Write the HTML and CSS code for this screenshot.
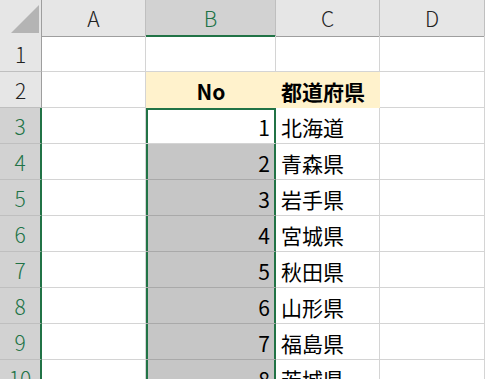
FILE: index.html
```html
<!DOCTYPE html>
<html lang="ja">
  <head>
    <meta charset="utf-8" />
    <meta name="viewport" content="width=device-width,initial-scale=1" />
    <title>Sheet1</title>
    <link rel="stylesheet" href="styles.css">
  </head>
  <body>
    <div class="sheet">
      <div class="row">
        <div class="corner">
          <svg width="42" height="36" viewBox="0 0 42 36"><polygon points="39,5 39,33 11,33" fill="#b4b4b4" /></svg>
        </div>
        <div class="col-head">A</div>
        <div class="col-head active">B</div>
        <div class="col-head">C</div>
        <div class="col-head">D</div>
      </div>

      <div class="row">
        <div class="row-head">1</div>
        <div class="cell"></div>
        <div class="cell"></div>
        <div class="cell"></div>
        <div class="cell"></div>
      </div>

      <div class="row">
        <div class="row-head">2</div>
        <div class="cell"></div>
        <div class="cell title center">No</div>
        <div class="cell title">都道府県</div>
        <div class="cell"></div>
      </div>

      <div class="row">
        <div class="row-head active">3</div>
        <div class="cell"></div>
        <div class="cell num sel first">1</div>
        <div class="cell">北海道</div>
        <div class="cell"></div>
      </div>

      <div class="row">
        <div class="row-head active">4</div>
        <div class="cell"></div>
        <div class="cell num sel picked">2</div>
        <div class="cell">青森県</div>
        <div class="cell"></div>
      </div>

      <div class="row">
        <div class="row-head active">5</div>
        <div class="cell"></div>
        <div class="cell num sel picked">3</div>
        <div class="cell">岩手県</div>
        <div class="cell"></div>
      </div>

      <div class="row">
        <div class="row-head active">6</div>
        <div class="cell"></div>
        <div class="cell num sel picked">4</div>
        <div class="cell">宮城県</div>
        <div class="cell"></div>
      </div>

      <div class="row">
        <div class="row-head active">7</div>
        <div class="cell"></div>
        <div class="cell num sel picked">5</div>
        <div class="cell">秋田県</div>
        <div class="cell"></div>
      </div>

      <div class="row">
        <div class="row-head active">8</div>
        <div class="cell"></div>
        <div class="cell num sel picked">6</div>
        <div class="cell">山形県</div>
        <div class="cell"></div>
      </div>

      <div class="row">
        <div class="row-head active">9</div>
        <div class="cell"></div>
        <div class="cell num sel picked">7</div>
        <div class="cell">福島県</div>
        <div class="cell"></div>
      </div>

      <div class="row">
        <div class="row-head active">10</div>
        <div class="cell"></div>
        <div class="cell num sel picked">8</div>
        <div class="cell">茨城県</div>
        <div class="cell"></div>
      </div>
    </div>
  </body>
</html>
```

FILE: styles.css
```css
html,
body {
  margin: 0;
  height: 100%;
  overflow: hidden;
  background-color: #fff;
}

*,
:after,
:before {
  box-sizing: border-box;
}

.sheet {
  font-family: "Noto Sans CJK JP", "Noto Sans", sans-serif;
  font-size: 21px;
  color: #000;
}

.row {
  display: grid;
  grid-template-columns: 42px 104px 130px 104px 105px;
  height: 36px;
}

.corner {
  background-color: #e6e6e6;
  border-right: 1px solid #9e9e9e;
  border-bottom: 1px solid #9e9e9e;
}

.corner svg {
  display: block;
}

.col-head {
  display: flex;
  align-items: center;
  justify-content: center;
  background-color: #e6e6e6;
  border-right: 1px solid #bfbfbf;
  border-bottom: 1px solid #9e9e9e;
  color: #222;
  font-weight: 300;
}

.col-head.active {
  background-color: #d2d2d2;
  border-bottom: 2px solid #217346;
  color: #217346;
}

.row-head {
  display: flex;
  align-items: center;
  justify-content: center;
  background-color: #e6e6e6;
  border-right: 1px solid #9e9e9e;
  border-bottom: 1px solid #bfbfbf;
  color: #222;
  font-weight: 300;
}

.row-head.active {
  background-color: #d2d2d2;
  border-right: 2px solid #217346;
  color: #217346;
}

.cell {
  display: flex;
  align-items: flex-end;
  padding: 0 4px 2px 5px;
  border-right: 1px solid #d4d4d4;
  border-bottom: 1px solid #d4d4d4;
  white-space: nowrap;
  line-height: 1.3;
}

.cell.title {
  background-color: #fff2cc;
  border-color: #fff2cc;
  font-weight: bold;
}

.cell.center {
  justify-content: center;
}

.cell.num {
  justify-content: flex-end;
}

/* selected range B3:B10 */
.cell.sel {
  padding-right: 5px;
  box-shadow: inset 2px 0 #217346, inset -1px 0 #217346;
  border-right: 1px solid #217346;
}

.cell.sel.first {
  box-shadow: inset 2px 0 #217346, inset -1px 0 #217346, inset 0 2px #217346;
}

.cell.picked {
  background-color: #c6c6c6;
  border-bottom-color: #a9a9a9;
}
```
